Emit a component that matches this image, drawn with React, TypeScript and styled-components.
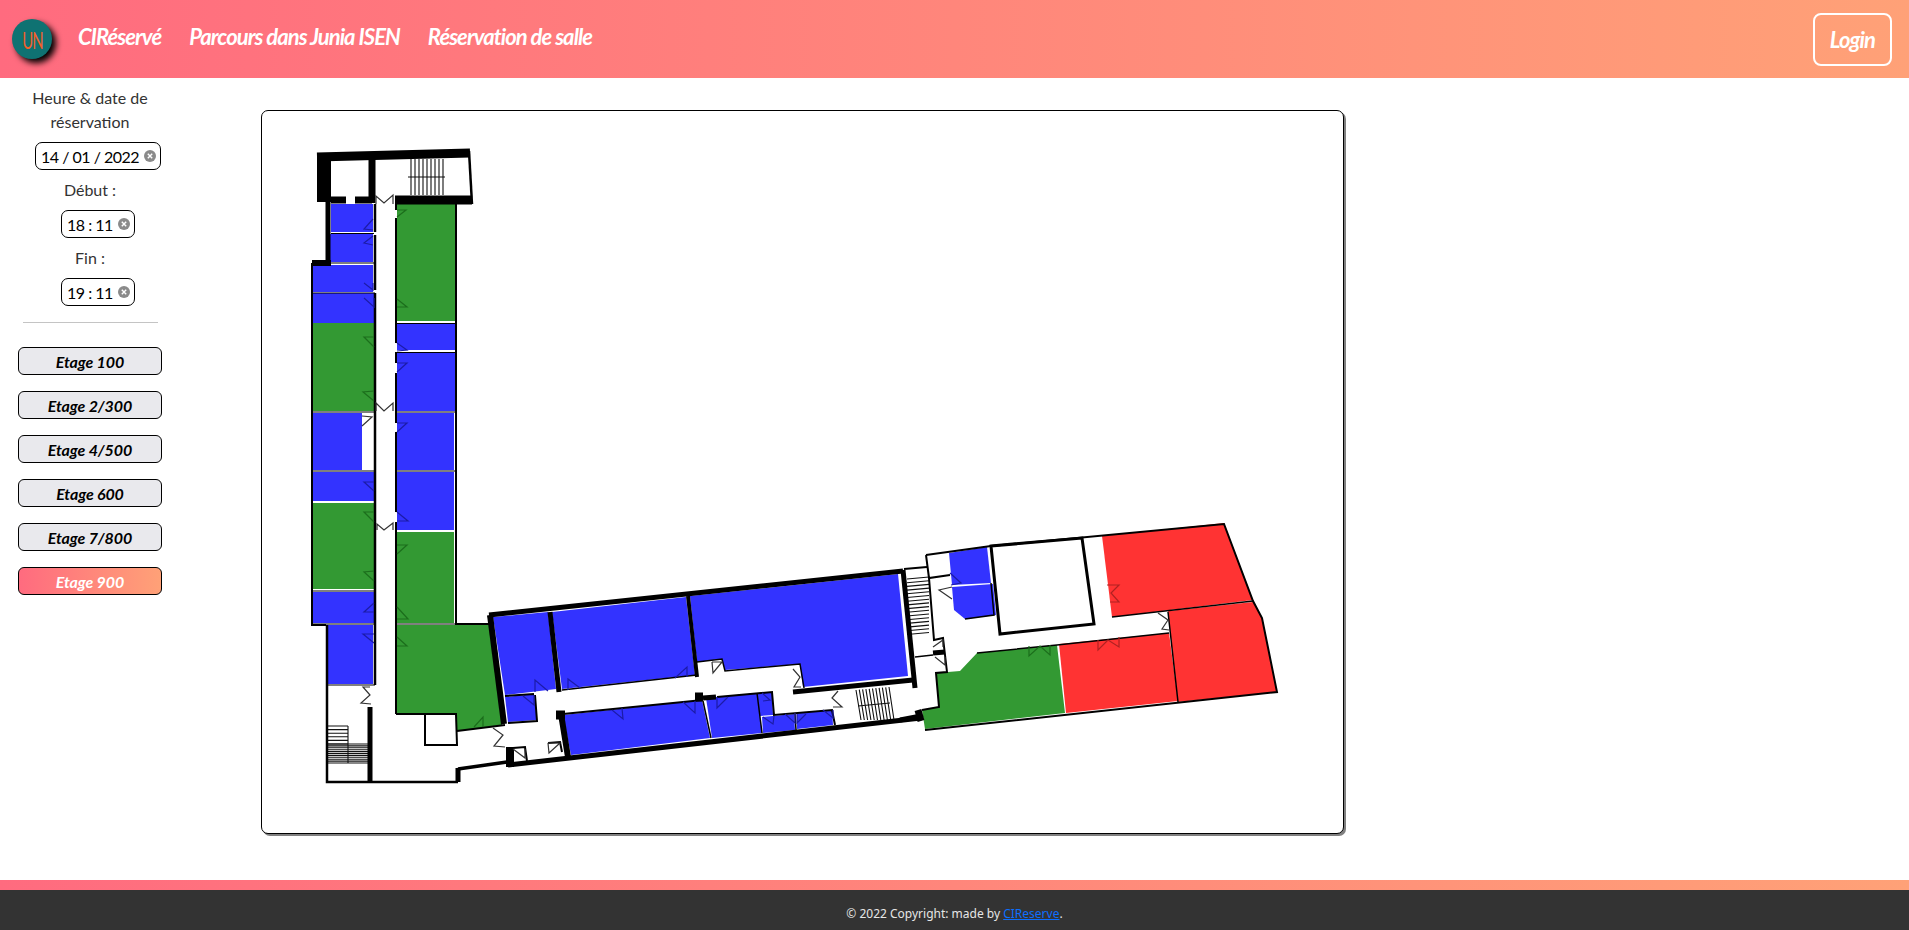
import * as React from 'react';
import styled, { createGlobalStyle } from 'styled-components';

const GlobalStyle = createGlobalStyle`
  html, body {
    margin: 0;
    padding: 0;
    background: #fff;
    font-family: Lato, "Liberation Sans", sans-serif;
  }
`;

const brandGradient = 'linear-gradient(90deg, #ff6b7f 0%, #ffa177 100%)';

const Page = styled.div`
  display: flex;
  flex-direction: column;
  min-height: 930px;
`;

const Header = styled.header`
  display: flex;
  align-items: center;
  height: 78px;
  padding: 0 17px 0 12px;
  background: ${brandGradient};
`;

const LogoBadge = styled.div`
  display: flex;
  align-items: center;
  justify-content: center;
  width: 40px;
  height: 40px;
  border-radius: 50%;
  background: #0f7272;
  box-shadow: 4px 4px 6px #000;
  color: #f4602a;
  font-size: 24px;
`;

const LogoLetters = styled.span`
  display: block;
  font-weight: 400;
  letter-spacing: -1.5px;
  transform: scaleX(0.62);
`;

const NavLink = styled.a`
  margin: 0 0 6px ${(p: { $first?: boolean }) => (p.$first ? '26px' : '28px')};
  color: #fff;
  font-size: 22px;
  font-style: italic;
  font-weight: 700;
  letter-spacing: -0.95px;
`;

const LoginButton = styled.button`
  width: 79px;
  height: 53px;
  margin-left: auto;
  border: 2px solid #fff;
  border-radius: 8px;
  background: transparent;
  color: #fff;
  font-family: Lato, sans-serif;
  font-size: 22px;
  font-style: italic;
  font-weight: 700;
  letter-spacing: -0.9px;
`;

const Main = styled.main`
  display: flex;
  flex: 1;
  align-items: flex-start;
`;

const Sidebar = styled.aside`
  display: flex;
  flex-direction: column;
  align-items: center;
  width: 180px;
  padding-top: 8px;
`;

const FieldLabel = styled.div`
  width: 144px;
  color: #333;
  font-size: 16px;
  line-height: 24px;
  text-align: center;
`;

const PickerBox = styled.div`
  box-sizing: border-box;
  display: flex;
  align-items: center;
  justify-content: space-between;
  width: ${(p: { $wide?: boolean }) => (p.$wide ? '126px' : '74px')};
  height: 28px;
  margin: 8px 0 8px 16px;
  padding: 0 4px 0 5px;
  border: 1px solid #000;
  border-radius: 7px;
  color: #000;
  font-size: 16px;
  letter-spacing: -0.5px;
  white-space: nowrap;
`;

const Rule = styled.hr`
  width: 135px;
  height: 1px;
  margin: 8px 0 24px;
  border: 0;
  background: #c4c4c4;
`;

const FloorButton = styled.button<{ $active?: boolean }>`
  box-sizing: border-box;
  width: 144px;
  height: 28px;
  margin-bottom: 16px;
  padding: 0;
  border: 1px solid #000;
  border-radius: 6px;
  background: ${(p) => (p.$active ? brandGradient : '#e9e9ed')};
  color: ${(p) => (p.$active ? '#fff' : '#000')};
  font-family: Lato, sans-serif;
  font-size: 16px;
  font-style: italic;
  font-weight: 700;
  letter-spacing: -0.1px;
`;

const PlanCard = styled.section`
  box-sizing: border-box;
  width: 1083px;
  height: 724px;
  margin: 32px 0 0 81px;
  border: 1px solid #000;
  border-radius: 7px;
  box-shadow: 2px 2px 0 #808080;
  background: #fff;
  overflow: hidden;
`;

const Plan = styled.svg`
  display: block;
  width: 100%;
  height: 100%;
`;

const Room = styled.polygon<{ $tone: string }>`
  fill: ${(p) => p.$tone};
`;

const Wall = styled.path<{ $w?: number }>`
  fill: none;
  stroke: #000;
  stroke-width: ${(p) => p.$w ?? 2};
`;

const Door = styled.polyline<{ $tone?: string }>`
  fill: none;
  stroke: ${(p) => p.$tone ?? '#333'};
  stroke-width: 1.2;
`;

const Steps = styled.path`
  fill: none;
  stroke: #111;
  stroke-width: 1.1;
`;

const FooterBar = styled.div`
  height: 10px;
  background: ${brandGradient};
`;

const Footer = styled.footer`
  height: 40px;
  background: #333;
  color: #e6e6e6;
  font-family: "Noto Sans", sans-serif;
  font-size: 12px;
  line-height: 47px;
  text-align: center;
`;

const FooterLink = styled.a`
  color: #0d6efd;
  text-decoration: underline;
`;

const BLUE = '#3333ff';
const GREEN = '#339933';
const RED = '#ff3333';
const DARK_BLUE = '#1c1ca8';
const DARK_GREEN = '#1c6e1c';
const DARK_RED = '#b02222';

const rooms: [string, string][] = [
  [BLUE, '331,204 373,204 373,232 331,232'],
  [BLUE, '330,234 373,234 373,262 330,262'],
  [BLUE, '313,265 373,265 373,292 313,292'],
  [BLUE, '313,293 374,293 374,323 313,323'],
  [GREEN, '313,323 374,323 374,411 313,411'],
  [BLUE, '313,413 362,413 362,470 313,470'],
  [BLUE, '313,472 374,472 374,501 313,501'],
  [GREEN, '313,503 374,503 374,589 313,589'],
  [BLUE, '313,592 374,592 374,623 313,623'],
  [BLUE, '327,625 373,625 373,684 327,684'],
  [GREEN, '397,204 455,204 455,321 397,321'],
  [BLUE, '397,324 455,324 455,350 397,350'],
  [BLUE, '397,353 455,353 455,411 397,411'],
  [BLUE, '397,413 454,413 454,470 397,470'],
  [BLUE, '397,472 454,472 454,530 397,530'],
  [GREEN, '397,532 454,532 454,623 397,623'],
  [GREEN, '396,625 489,625 502,725 457,731 456,714 396,714'],
  [BLUE, '493,617 548,612 556,689 505,695'],
  [BLUE, '505,697 534,694 537,720 508,722'],
  [BLUE, '552,612 686,597 695,675 562,689'],
  [BLUE, '690,596 898,574 908,676 803,687 800,664 725,670 722,659 697,662'],
  [BLUE, '563,715 702,700 710,738 571,755'],
  [BLUE, '706,698 757,693 762,733 712,738'],
  [BLUE, '757,693 772,692 773,715 760,716'],
  [BLUE, '762,717 794,714 795,730 763,733'],
  [BLUE, '797,713 832,710 833,725 797,729'],
  [BLUE, '949,553 987,547 991,583 952,585'],
  [BLUE, '952,587 993,584 996,615 965,619 954,610'],
  [RED, '1102,536 1224,523 1253,600 1112,617'],
  [RED, '1168,611 1253,602 1262,618 1277,692 1178,702'],
  [RED, '1059,644 1169,633 1178,701 1066,713'],
  [GREEN, '936,673 960,671 977,653 1057,645 1065,713 925,729 922,710 939,707'],
];

const thickWalls: [number, string][] = [
  // top block and outer left side
  [9, 'M317 157 L470 153'],
  [14, 'M324 155 L324 202'],
  [7, 'M372 155 L372 203'],
  [2.5, 'M469 151 L472 204'],
  [9, 'M395 200 L472 200'],
  [7, 'M331 200 L346 200 M355 200 L372 200'],
  [5, 'M328 202 L328 263'],
  [6, 'M312 263 L331 263'],
  [2, 'M312 263 L312 625 L326 625'],
  [2.5, 'M327 625 L327 782 L458 782'],
  [5, 'M370 707 L370 782'],
  [5, 'M458 768 L458 782'],
  [3.5, 'M458 769 L507 762'],
  // corridor sides, broken at the doors
  [2.5, 'M375 204 L375 232 M375 235 L375 290 M375 293 L375 411'],
  [2.5, 'M375 411 L375 685'],
  [2, 'M396 204 L396 210 M396 218 L396 343 M396 352 L396 363 M396 373 L396 423 M396 432 L396 512 M396 522 L396 714'],
  [2, 'M456 204 L456 624 L489 624'],
  // separators between rooms of the two columns
  [1.2, 'M331 233.5 L374 233.5 M313 293 L375 293 M313 412 L375 412 M313 471 L375 471 M313 591 L375 591 M313 624 L375 624 M327 685 L375 685 M330 263 L374 263'],
  [1, 'M397 352.5 L456 352.5 M397 412 L456 412 M396 471 L456 471 M397 323.5 L456 323.5 M396 624 L456 624'],
  [2, 'M396 714 L456 714 L457 745 L425 745 L425 714 M457 731 L505 725'],
  // long wing
  [5, 'M489 615 L903 571'],
  [6, 'M490 615 L504 724'],
  [5, 'M550 612 L559 692'],
  [4, 'M688 596 L697 677'],
  [1.5, 'M562 690 L697 675 M697 662 L722 659 L725 671 L800 664 L804 688'],
  [5, 'M793 692 L913 680'],
  [5, 'M903 570 L915 688'],
  [5, 'M508 765 L921 718'],
  [2, 'M563 714 L703 700 M717 697 L772 692 L774 715 L832 710 L835 725'],
  [6, 'M561 714 L568 757'],
  [9, 'M556 715 L565 715 M695 697 L703 697'],
  [5, 'M703 698 L716 697'],
  [2, 'M535 695 L537 721 L508 723 M505 696 L534 694'],
  [8, 'M510 747 L510 767'],
  [2, 'M513 748 L525 747 L527 761 M548 743 L560 742 L562 752'],
  [1.5, 'M703 701 L711 738 M757 693 L762 733 M795 714 L796 730'],
  // east wing
  [2, 'M904 569 L927 567 M926 555 L991 546 L1224 524 L1253 601 L1262 618 L1277 692 L925 730'],
  [2, 'M926 555 L929 578 L950 575 M929 578 L934 640 L943 638 L947 672 L936 673 L939 707 L922 710'],
  [3, 'M991 546 L1082 538 L1094 624 L1000 634 Z'],
  [1.5, 'M991 583 L994 615 L965 619 M915 657 L933 655 M977 653 L1057 645 L1169 633 M1112 617 L1253 601 M1168 612 L1178 702'],
  [5, 'M933 653 L945 652'],
  [5, 'M900 720 L921 716'],
  [7, 'M918 710 L921 721'],
];

const doors: [string, string?][] = [
  ['373,219 364,229 373,230', DARK_BLUE],
  ['373,236 364,243 373,245', DARK_BLUE],
  ['364,283 373,290 373,283', DARK_BLUE],
  ['364,298 374,307 374,298', DARK_BLUE],
  ['374,337 364,337 374,347', DARK_GREEN],
  ['374,391 363,392 374,401', DARK_GREEN],
  ['397,217 406,210 397,210', DARK_GREEN],
  ['397,299 407,307 397,307', DARK_GREEN],
  ['397,343 407,350 397,351', DARK_BLUE],
  ['397,372 407,363 397,363', DARK_BLUE],
  ['397,432 407,423 397,423', DARK_BLUE],
  ['362,426 372,417 362,416'],
  ['376,204 376,196 384,203 393,195 393,204'],
  ['376,411 376,403 384,411 393,403 393,411'],
  ['374,482 364,482 374,491', DARK_BLUE],
  ['374,512 364,512 374,522', DARK_GREEN],
  ['374,571 364,572 374,581', DARK_GREEN],
  ['374,603 364,612 374,612', DARK_BLUE],
  ['374,634 363,634 374,643', DARK_BLUE],
  ['397,512 408,521 397,521', DARK_BLUE],
  ['397,554 407,545 397,545', DARK_GREEN],
  ['397,607 408,619 397,619', DARK_GREEN],
  ['397,637 407,646 397,646', DARK_GREEN],
  ['377,530 377,524 384,530 393,523 393,530'],
  ['370,687 363,687 370,695 361,703 371,704'],
  ['474,727 483,717 483,727', DARK_GREEN],
  ['493,728 503,735 494,746 505,747'],
  ['535,692 535,680 548,691', DARK_BLUE],
  ['568,690 568,679 580,688', DARK_BLUE],
  ['675,678 687,667 687,677', DARK_BLUE],
  ['523,696 534,705 534,695', DARK_BLUE],
  ['612,710 623,719 622,708', DARK_BLUE],
  ['683,702 695,713 695,701', DARK_BLUE],
  ['728,697 717,708 717,697', DARK_BLUE],
  ['762,693 770,700 763,701', DARK_BLUE],
  ['763,717 773,724 774,716', DARK_BLUE],
  ['785,714 795,723 795,713', DARK_BLUE],
  ['806,714 797,723 797,714', DARK_BLUE],
  ['823,710 833,718 833,710', DARK_BLUE],
  ['712,662 722,662 713,673 712,662'],
  ['793,669 800,677 794,687 801,687'],
  ['838,691 832,698 842,707 833,707'],
  ['513,749 525,758 525,749'],
  ['548,743 560,743 549,753 548,743'],
  ['950,573 961,583 951,585', DARK_BLUE],
  ['952,587 939,590 952,599'],
  ['1107,585 1119,585 1111,593 1119,602 1110,602', DARK_RED],
  ['1158,613 1168,620 1162,629 1169,630'],
  ['1029,646 1029,656 1040,646 1050,655 1050,645', DARK_GREEN],
  ['1098,640 1098,650 1108,640 1119,647 1119,637', DARK_RED],
  ['933,647 943,640 943,647'],
  ['935,657 945,665 945,657'],
];

const range = (n: number) => Array.from({ length: n }, (_, i) => i);

const stairs = [
  // top block
  range(9).map((i) => `M${411 + i * 4} 159 L${411 + i * 4} 195`).join(' '),
  'M408 177 L445 177',
  // south west
  range(6).map((i) => `M327 ${726 + i * 3.6} L348 ${726 + i * 3.6}`).join(' '),
  range(11).map((i) => `M327 ${744 + i * 1.9} L369 ${744 + i * 1.9}`).join(' '),
  'M348 726 L348 763',
  // long wing, corridor
  range(11).map((i) => `M${856 + i * 3.3} ${687 + (10 - i) * 0.3} L${861 + i * 3.3} 720`).join(' '),
  'M858 706 L890 703',
  // long wing, east end
  range(16).map((i) => `M907 ${579 + i * 3.7} L929 ${577 + i * 3.7}`).join(' '),
];

const ClearIcon = () => (
  <svg width="12" height="12" viewBox="0 0 12 12" aria-hidden="true">
    <circle cx="6" cy="6" r="6" fill="#8a8a8a" />
    <path d="M3.8 3.8 L8.2 8.2 M8.2 3.8 L3.8 8.2" stroke="#fff" strokeWidth="1.4" />
  </svg>
);

const floors = ['Etage 100', 'Etage 2/300', 'Etage 4/500', 'Etage 600', 'Etage 7/800', 'Etage 900'];

const FloorPlan = () => (
  <Plan viewBox="262 111 1081 722">
    {rooms.map(([tone, points]) => (
      <Room key={points} $tone={tone} points={points} />
    ))}
    {stairs.map((d) => (
      <Steps key={d} d={d} />
    ))}
    {thickWalls.map(([w, d]) => (
      <Wall key={d} $w={w} d={d} />
    ))}
    {doors.map(([points, tone]) => (
      <Door key={points} $tone={tone} points={points} />
    ))}
  </Plan>
);

export default function App() {
  return (
    <Page>
      <GlobalStyle />
      <Header>
        <LogoBadge>
          <LogoLetters>UN</LogoLetters>
        </LogoBadge>
        <NavLink $first>CIRéservé</NavLink>
        <NavLink>Parcours dans Junia ISEN</NavLink>
        <NavLink>Réservation de salle</NavLink>
        <LoginButton>Login</LoginButton>
      </Header>
      <Main>
        <Sidebar>
          <FieldLabel>Heure &amp; date de réservation</FieldLabel>
          <PickerBox $wide>
            14 / 01 / 2022
            <ClearIcon />
          </PickerBox>
          <FieldLabel>Début :</FieldLabel>
          <PickerBox>
            18 : 11
            <ClearIcon />
          </PickerBox>
          <FieldLabel>Fin :</FieldLabel>
          <PickerBox>
            19 : 11
            <ClearIcon />
          </PickerBox>
          <Rule />
          {floors.map((name) => (
            <FloorButton key={name} $active={name === 'Etage 900'}>
              {name}
            </FloorButton>
          ))}
        </Sidebar>
        <PlanCard>
          <FloorPlan />
        </PlanCard>
      </Main>
      <FooterBar />
      <Footer>
        © 2022 Copyright: made by <FooterLink>CIReserve</FooterLink>.
      </Footer>
    </Page>
  );
}
